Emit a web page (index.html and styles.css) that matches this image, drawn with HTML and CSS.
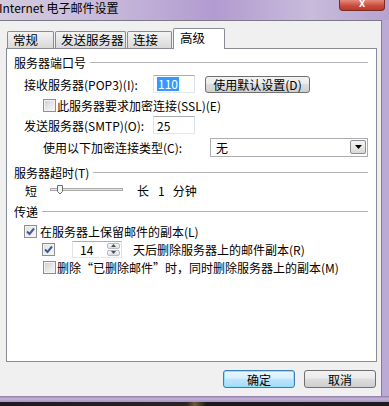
FILE: index.html
```html
<!DOCTYPE html>
<html lang="zh-CN">
<head>
  <meta charset="UTF-8" />
  <title>Internet 电子邮件设置</title>
  <link rel="stylesheet" href="styles.css">
</head>
<body>
  <div class="screen">
    <div class="titlebar">
      <span class="title">Internet 电子邮件设置</span>
      <span class="close"><b>X</b></span>
    </div>

    <div class="frame">
      <div class="client">
        <div class="tabs">
          <div class="tab tab-general">常规</div>
          <div class="tab tab-outgoing">发送服务器</div>
          <div class="tab tab-connect">连接</div>
          <div class="tab tab-active">高级</div>
        </div>

        <div class="panel">
          <div class="row group">
            <span>服务器端口号</span><i class="rule"></i>
          </div>
          <div class="row mt4 in10">
            <span class="lbl-port">接收服务器(POP3)(I):</span>
            <div class="field port"><span class="selected">110</span></div>
            <button class="btn btn-default">使用默认设置(D)</button>
          </div>
          <div class="row mt3 in29">
            <span class="check"></span>
            <span class="txt-after">此服务器要求加密连接(SSL)(E)</span>
          </div>
          <div class="row mt2 in10">
            <span class="lbl-port">发送服务器(SMTP)(O):</span>
            <div class="field port">25</div>
          </div>
          <div class="row mt4 in29">
            <span class="lbl-enc">使用以下加密连接类型(C):</span>
            <div class="select">
              <span>无</span>
              <span class="drop">
                <svg width="7" height="4" viewBox="0 0 7 4"><path d="M0 0H7L3.5 4Z" fill="#000"/></svg>
              </span>
            </div>
          </div>

          <div class="row group mt7">
            <span>服务器超时(T)</span><i class="rule"></i>
          </div>
          <div class="row in11">
            <span class="lbl-short">短</span>
            <svg class="slider" width="73" height="14" viewBox="0 0 73 14">
              <rect x="0.5" y="5.5" width="72" height="2" fill="#e6e6e6" stroke="#a8a8a8"/>
              <path d="M7.5 2.5H12.5V8.5L10 11L7.5 8.5Z" fill="#f3f3f3" stroke="#6d6d6d"/>
            </svg>
            <span class="long">长</span><span class="num">1</span><span class="unit">分钟</span>
          </div>

          <div class="row group mt3">
            <span>传递</span><i class="rule"></i>
          </div>
          <div class="row mt2 in10">
            <span class="check checked">
              <svg width="9" height="9" viewBox="0 0 9 9"><path d="M1 4.5L3.5 7L8 1.5" fill="none" stroke="#3f5b9b" stroke-width="2"/></svg>
            </span>
            <span class="txt-keep">在服务器上保留邮件的副本(L)</span>
          </div>
          <div class="row in28">
            <span class="check checked">
              <svg width="9" height="9" viewBox="0 0 9 9"><path d="M1 4.5L3.5 7L8 1.5" fill="none" stroke="#3f5b9b" stroke-width="2"/></svg>
            </span>
            <div class="field spin">
              <span>14</span>
              <span class="spin-btns">
                <span class="spin-up"><svg width="5" height="3" viewBox="0 0 5 3"><path d="M0 3H5L2.5 0Z" fill="#4d4d4d"/></svg></span>
                <span class="spin-down"><svg width="5" height="3" viewBox="0 0 5 3"><path d="M0 0H5L2.5 3Z" fill="#4d4d4d"/></svg></span>
              </span>
            </div>
            <span class="txt-days">天后删除服务器上的邮件副本(R)</span>
          </div>
          <div class="row in29">
            <span class="check"></span>
            <span class="txt-after">删除“已删除邮件”时，同时删除服务器上的副本(M)</span>
          </div>
        </div>

        <div class="actions">
          <button class="btn btn-ok">确定</button>
          <button class="btn">取消</button>
        </div>
      </div>
    </div>

    <div class="frame-bottom"></div>
    <div class="taskbar"></div>
  </div>
</body>
</html>
```

FILE: styles.css
```css
/* Base */
body {
  margin: 0;
  font-family: "Noto Sans CJK SC", "Noto Sans", sans-serif;
  font-size: 12px;
  color: #000;
}
.screen {
  width: 389px;
  height: 406px;
  overflow: hidden;
  display: flex;
  flex-direction: column;
}

/* Title bar */
.titlebar {
  height: 20px;
  display: flex;
  align-items: flex-start;
  background: linear-gradient(90deg, #d4cbdd 0%, #c5b6d9 30%, #b29bd0 55%, #c8bbdb 80%, #b6a2d0 100%);
}
.title {
  line-height: 14px;
  margin-top: 1px;
  margin-left: -1px;
}
.close {
  margin-left: auto;
  margin-right: 4px;
  width: 46px;
  height: 11px;
  box-sizing: border-box;
  border: 1px solid #7c2b22;
  border-top: none;
  border-radius: 0 0 4px 4px;
  background: linear-gradient(#e48a7c, #c94a3b 60%, #b83a2c);
  color: #fff;
  text-align: center;
}
.close b {
  display: block;
  font-family: "DejaVu Sans", sans-serif;
  font-size: 8px;
  line-height: 9px;
}

/* Window frame */
.frame {
  height: 376px;
  display: flex;
  background: linear-gradient(90deg, #a792c4, #bcaad6);
}
.client {
  width: 382px;
  box-sizing: border-box;
  border-top: 1px solid #7b7888;
  border-right: 1px solid #857d98;
  background: #f0f0f0;
  padding-top: 7px;
}
.frame-bottom {
  height: 6px;
  background: linear-gradient(#8e7ca8, #c4b3d9 45%, #a993c4);
}
.taskbar {
  height: 4px;
  background: linear-gradient(90deg, #1d1b20 0%, #2a2526 48%, #6b5a3a 50%, #1a1a1a 53%, #1d1d1d 100%);
}

/* Tabs */
.tabs {
  height: 20px;
  display: flex;
  align-items: flex-end;
  gap: 1px;
  padding-left: 7px;
}
.tab {
  height: 17px;
  box-sizing: border-box;
  border: 1px solid #898c95;
  border-bottom: none;
  border-radius: 2px 2px 0 0;
  background: linear-gradient(#f3f3f3, #e6e6e6 50%, #d9d9d9);
  font-size: 12.5px;
  line-height: 15px;
  padding-left: 5px;
  white-space: nowrap;
  overflow: hidden;
}
.tab-general { width: 47px; }
.tab-outgoing { width: 71px; }
.tab-connect { width: 45px; }
.tab-active {
  width: 52px;
  height: 21px;
  margin-bottom: -1px;
  position: relative;
  z-index: 1;
  background: #fff;
  padding-left: 6px;
  line-height: 17px;
}

/* Panel */
.panel {
  margin-left: 6px;
  width: 371px;
  height: 314px;
  box-sizing: border-box;
  border: 1px solid #898c95;
  background: #fff;
  padding: 4px 8px 0 7px;
}
.row {
  display: flex;
  align-items: center;
  height: 18px;
  white-space: nowrap;
}
.group .rule {
  flex: 1;
  height: 1px;
  margin-left: 4px;
  background: #b4b4b4;
}
.mt2 { margin-top: 2px; }
.mt3 { margin-top: 3px; }
.mt4 { margin-top: 4px; }
.mt7 { margin-top: 7px; }
.in10 { padding-left: 10px; }
.in11 { padding-left: 11px; }
.in28 { padding-left: 28px; }
.in29 { padding-left: 29px; }

.lbl-port { width: 129px; }
.lbl-enc { width: 167px; }
.lbl-short { width: 25px; }
.txt-after { margin-left: 1px; }
.txt-keep { margin-left: 3px; }
.txt-days { margin-left: 11px; }

/* Inputs */
.field {
  height: 18px;
  box-sizing: border-box;
  border: 1px solid #abadb3;
  border-color: #abadb3 #dbdfe6 #e3e9ef #e2e3ea;
  display: flex;
  align-items: center;
  padding-left: 3px;
}
.port { width: 42px; }
.selected {
  background: #3399ff;
  color: #fff;
  padding: 0 1px;
  line-height: 14px;
}
.select {
  width: 158px;
  height: 19px;
  box-sizing: border-box;
  border: 1px solid #abadb3;
  display: flex;
  align-items: center;
  justify-content: space-between;
  padding: 0 1px 0 5px;
}
.drop {
  width: 16px;
  height: 14px;
  box-sizing: border-box;
  border: 1px solid #8c8f94;
  border-radius: 2px;
  background: linear-gradient(#f4f4f4, #dadada);
  display: flex;
  align-items: center;
  justify-content: center;
}
.spin {
  width: 50px;
  height: 17px;
  margin-left: 17px;
  padding: 1px 1px 1px 7px;
  justify-content: space-between;
}
.spin-btns {
  width: 13px;
  height: 100%;
  display: flex;
  flex-direction: column;
  gap: 1px;
}
.spin-up, .spin-down {
  flex: 1;
  box-sizing: border-box;
  border: 1px solid #b7bcc4;
  border-radius: 2px;
  background: linear-gradient(#f6f7f9, #dde1e6);
  display: flex;
  align-items: center;
  justify-content: center;
}

/* Checkboxes */
.check {
  width: 13px;
  height: 13px;
  flex-shrink: 0;
  box-sizing: border-box;
  border: 1px solid #8e8f8f;
  box-shadow: inset 0 0 0 1px #f2f2f2;
  background: linear-gradient(135deg, #c9ccd1, #e9eaec 60%, #f7f7f7);
  display: flex;
  align-items: center;
  justify-content: center;
}
.check.checked {
  background: linear-gradient(135deg, #dfe2e6, #f7f7f7);
}

/* Slider row */
.slider { flex-shrink: 0; }
.long { margin-left: 14px; }
.num { margin-left: 9px; }
.unit { margin-left: 8px; }

/* Buttons */
.btn {
  font: inherit;
  font-size: 12px;
  color: #000;
  height: 18px;
  padding: 0;
  border: 1px solid #707070;
  border-radius: 3px;
  background: linear-gradient(#f2f2f2 0%, #ebebeb 45%, #dddddd 50%, #cfcfcf 100%);
  line-height: 15px;
}
.btn-default {
  width: 105px;
  height: 17px;
  margin-left: 10px;
}
.actions {
  display: flex;
  justify-content: flex-end;
  gap: 9px;
  margin-top: 8px;
  padding-right: 5px;
}
.actions .btn { width: 72px; }
.btn-ok {
  border-color: #3c7fb1;
  background: linear-gradient(#eaf6fd 0%, #d9f0fc 45%, #bee6fd 50%, #a7d9f5 100%);
  box-shadow: inset 0 0 0 1px #8ee0fb;
}
```
